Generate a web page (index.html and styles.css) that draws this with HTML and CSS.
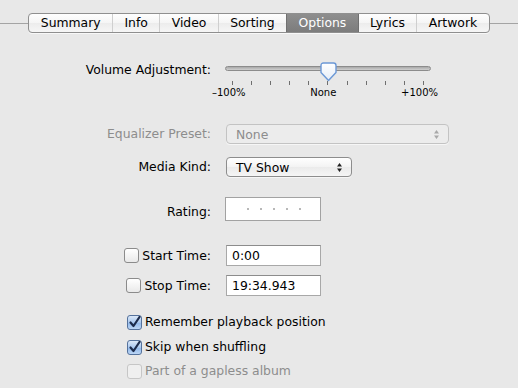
FILE: index.html
```html
<!DOCTYPE html>
<html lang="en">
<head>
    <meta charset="UTF-8">
    <title>Options</title>
    <link rel="stylesheet" href="styles.css">
</head>
<body>
    <div class="tabbar">
        <div class="tabs">
            <span class="tab">Summary</span>
            <span class="tab">Info</span>
            <span class="tab">Video</span>
            <span class="tab">Sorting</span>
            <span class="tab active">Options</span>
            <span class="tab">Lyrics</span>
            <span class="tab">Artwork</span>
        </div>
    </div>

    <div class="row volume">
        <div class="label">Volume Adjustment:</div>
        <div class="slider">
            <div class="track"></div>
            <svg class="thumb" width="17" height="20" viewBox="0 0 17 20">
                <defs>
                    <linearGradient id="thumbFill" x1="0" y1="0" x2="0" y2="1">
                        <stop offset="0" stop-color="#ffffff"/>
                        <stop offset="1" stop-color="#e4ecf6"/>
                    </linearGradient>
                </defs>
                <path d="M3.5 1 H13.5 Q16 1 16 3.5 V10.5 L8.5 18.5 L1 10.5 V3.5 Q1 1 3.5 1 Z" fill="url(#thumbFill)" stroke="#6b98d6" stroke-width="1.4" stroke-linejoin="round"/>
            </svg>
            <div class="ticks">
                <i></i><i></i><i></i><i></i><i></i><i></i><i></i><i></i><i></i><i></i><i></i>
            </div>
            <div class="scale">
                <span>&ndash;100%</span>
                <span>None</span>
                <span>+100%</span>
            </div>
        </div>
    </div>

    <div class="row eq">
        <div class="label disabled">Equalizer Preset:</div>
        <div class="popup wide off">
            <span>None</span>
            <svg width="7" height="11" viewBox="0 0 7 11"><path d="M3.5 1 L6 4.5 H1 Z M3.5 10 L6 6.5 H1 Z" fill="#a8a8a8"/></svg>
        </div>
    </div>

    <div class="row kind">
        <div class="label">Media Kind:</div>
        <div class="popup">
            <span>TV Show</span>
            <svg width="7" height="11" viewBox="0 0 7 11"><path d="M3.5 1 L6 4.5 H1 Z M3.5 10 L6 6.5 H1 Z" fill="#222"/></svg>
        </div>
    </div>

    <div class="row rating">
        <div class="label">Rating:</div>
        <div class="stars"><i></i><i></i><i></i><i></i><i></i></div>
    </div>

    <div class="row start">
        <div class="label"><span class="check"></span>Start Time:</div>
        <div class="field">0:00</div>
    </div>

    <div class="row stop">
        <div class="label"><span class="check"></span>Stop Time:</div>
        <div class="field">19:34.943</div>
    </div>

    <div class="option first">
        <span class="check on"><svg width="13" height="13" viewBox="0 0 13 13"><path d="M2.5 6.5 L5.5 10 L11.5 1" fill="none" stroke="#1d2c4c" stroke-width="2.2" stroke-linecap="round" stroke-linejoin="round"/></svg></span>
        Remember playback position
    </div>
    <div class="option">
        <span class="check on"><svg width="13" height="13" viewBox="0 0 13 13"><path d="M2.5 6.5 L5.5 10 L11.5 1" fill="none" stroke="#1d2c4c" stroke-width="2.2" stroke-linecap="round" stroke-linejoin="round"/></svg></span>
        Skip when shuffling
    </div>
    <div class="option disabled">
        <span class="check off"></span>
        Part of a gapless album
    </div>
</body>
</html>
```

FILE: styles.css
```css
* {
    margin: 0;
    padding: 0;
    box-sizing: border-box;
}

body {
    width: 518px;
    height: 388px;
    overflow: hidden;
    background: #e8e8e8;
    font-family: "DejaVu Sans", "Liberation Sans", sans-serif;
    font-size: 12.4px;
    color: #000;
}

/* tab strip */
.tabbar {
    margin-top: 13px;
    display: flex;
    justify-content: center;
    background: linear-gradient(#a4a4a4, #a4a4a4) 0 50% / 100% 1px no-repeat;
}

.tabs {
    display: flex;
    border: 1px solid #8f8f8f;
    border-radius: 4px;
    overflow: hidden;
    background: linear-gradient(#fefefe, #f5f5f5 50%, #ececec 51%, #f6f6f6);
    box-shadow: 0 1px 0 rgba(255, 255, 255, 0.7);
}

.tab {
    height: 18px;
    line-height: 18px;
    padding: 0 11.4px;
    border-left: 1px solid #cfcfcf;
}

.tab:first-child {
    border-left: none;
}

.tab.active {
    background: linear-gradient(#8e8e8e, #7c7c7c);
    border-left-color: #707070;
    color: #fff;
}

.tab.active + .tab {
    border-left-color: #707070;
}

/* form rows */
.row {
    display: flex;
    align-items: center;
}

.row .label {
    width: 211px;
    margin-right: 15px;
    text-align: right;
    line-height: 16px;
    display: flex;
    justify-content: flex-end;
    align-items: center;
}

.label.disabled,
.option.disabled {
    color: #8d8d8d;
}

.row.volume {
    margin-top: 29px;
    align-items: flex-start;
}

.row.volume .label {
    margin-right: 14px;
}

.row.eq {
    margin-top: 25px;
}

.row.kind {
    margin-top: 13px;
}

.row.rating {
    margin-top: 20px;
    align-items: flex-start;
}

.row.rating .label {
    margin-top: 7px;
    margin-right: 14px;
}

.row.start {
    margin-top: 24px;
}

.row.stop {
    margin-top: 9px;
}

/* volume slider */
.slider {
    position: relative;
    width: 206px;
}

.track {
    margin-top: 4px;
    height: 5px;
    border: 1px solid #8c8c8c;
    border-radius: 3px;
    background: linear-gradient(#a9a9a9, #cfcfcf);
}

.thumb {
    position: absolute;
    left: 95px;
    top: 0;
}

.ticks {
    margin-top: 10px;
    padding: 0 7px 0 7px;
    display: flex;
    justify-content: space-between;
}

.ticks i {
    width: 1px;
    height: 4px;
    background: #6f6f6f;
}

.scale {
    margin: 2px -7px 0 -13px;
    display: flex;
    justify-content: space-between;
    font-size: 10px;
    line-height: 12px;
}

/* popup buttons */
.popup {
    width: 126px;
    height: 20px;
    padding: 0 8px 0 9px;
    border: 1px solid #8d8d8d;
    border-radius: 4px;
    background: linear-gradient(#ffffff, #f3f3f3 50%, #ebebeb 51%, #f5f5f5);
    box-shadow: 0 1px 0 rgba(255, 255, 255, 0.6);
    display: flex;
    align-items: center;
    justify-content: space-between;
}

.popup.wide {
    width: 223px;
}

.popup.off {
    border-color: #c3c3c3;
    background: #ececec;
    color: #8d8d8d;
}

/* rating box */
.stars {
    width: 96px;
    height: 24px;
    border: 1px solid #a2a2a2;
    background: #fff;
    padding-left: 21px;
    display: flex;
    align-items: center;
    gap: 11px;
}

.stars i {
    width: 2px;
    height: 2px;
    background: #b8b8b8;
}

/* text fields */
.field {
    width: 95px;
    height: 21px;
    line-height: 19px;
    padding-left: 5px;
    border: 1px solid #a8a8a8;
    border-top-color: #8c8c8c;
    background: #fff;
}

/* checkboxes */
.check {
    width: 15px;
    height: 15px;
    margin-right: 3px;
    border: 1px solid #8b8b8b;
    border-radius: 3px;
    background: linear-gradient(#ffffff, #e9e9e9);
    display: inline-flex;
    align-items: center;
    justify-content: center;
    flex-shrink: 0;
}

.check.on {
    border-color: #55729c;
    background: linear-gradient(#dbe8f8, #a9c8ef 50%, #8fb7ea 51%, #bcd6f5);
}

.check.off {
    border-color: #c6c6c6;
    background: #efefef;
}

.option {
    padding-left: 127px;
    line-height: 16px;
    display: flex;
    align-items: center;
    margin-top: 9px;
}

.option.first {
    margin-top: 18px;
}

.option.disabled {
    margin-top: 8px;
}
```
